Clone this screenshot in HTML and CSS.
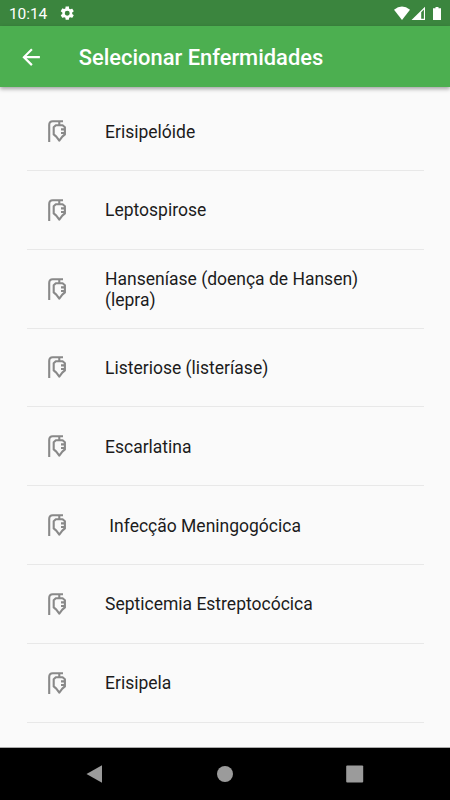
FILE: index.html
```html
<!DOCTYPE html>
<html lang="pt-BR">
<head>
<meta charset="utf-8">
<title>Selecionar Enfermidades</title>
<link rel="stylesheet" href="styles.css">
</head>
<body>
<svg class="defs" aria-hidden="true">
  <symbol id="drip" viewBox="0 0 26 26">
    <path d="M5.2 24V7Q5.2 3.3 8.8 3.3H19M15.3 3.3V7.2M11.8 7.2H18.6L20.9 9.2V16.4L18.3 18.6L15.3 22.6L12.3 18.6L9.7 16.4V9.2ZM20.9 11.4H17M20.9 15H17" fill="none" stroke="#898989" stroke-width="2.1" stroke-linejoin="round"/>
  </symbol>
</svg>
<div class="screen">
  <div class="status">
    <span class="time">10:14</span>
    <svg class="gear" viewBox="0 0 24 24"><path fill="#fff" fill-rule="evenodd" d="M19.14 12.94c.04-.3.06-.61.06-.94s-.02-.64-.07-.94l2.03-1.58a.49.49 0 0 0 .12-.61l-1.92-3.32a.49.49 0 0 0-.59-.22l-2.39.96a7 7 0 0 0-1.62-.94l-.36-2.54A.48.48 0 0 0 13.92 2h-3.84a.48.48 0 0 0-.48.41l-.36 2.54a7.3 7.3 0 0 0-1.62.94l-2.39-.96a.48.48 0 0 0-.59.22L2.74 8.87a.48.48 0 0 0 .12.61l2.03 1.58a7 7 0 0 0 0 1.88l-2.03 1.58a.49.49 0 0 0-.12.61l1.92 3.32c.12.22.37.29.59.22l2.39-.96c.5.38 1.03.7 1.62.94l.36 2.54c.05.24.24.41.48.41h3.84c.24 0 .44-.17.47-.41l.36-2.54a7.3 7.3 0 0 0 1.62-.94l2.39.96c.22.08.47 0 .59-.22l1.92-3.32a.48.48 0 0 0-.12-.61zM12 15.6a3.6 3.6 0 1 1 0-7.2 3.6 3.6 0 0 1 0 7.2z"/></svg>
    <svg class="signals" viewBox="0 0 50 16" fill="#fff">
      <path d="M0 3.7Q8-2.7 16 3.7L8 14Z"/>
      <path fill-rule="evenodd" d="M17.5 14L31 .7V14ZM27.2 6.2V12.8H29.9V3.6Z"/>
      <path d="M39.5 2.3H41.5V1H44.5V2.3H47V14H39V2.3Z"/>
    </svg>
  </div>
  <header class="appbar">
    <svg class="back" viewBox="0 0 24 24"><path fill="#fff" d="M20 11H7.83l5.59-5.59L12 4l-8 8 8 8 1.41-1.41L7.83 13H20z"/></svg>
    <h1>Selecionar Enfermidades</h1>
  </header>
  <ul class="list">
    <li><svg><use href="#drip"/></svg><span>Erisipelóide</span></li>
    <li><svg><use href="#drip"/></svg><span>Leptospirose</span></li>
    <li><svg><use href="#drip"/></svg><span>Hanseníase (doença de Hansen) (lepra)</span></li>
    <li><svg><use href="#drip"/></svg><span>Listeriose (listeríase)</span></li>
    <li><svg><use href="#drip"/></svg><span>Escarlatina</span></li>
    <li><svg><use href="#drip"/></svg><span>&nbsp;Infecção Meningogócica</span></li>
    <li><svg><use href="#drip"/></svg><span>Septicemia Estreptocócica</span></li>
    <li><svg><use href="#drip"/></svg><span>Erisipela</span></li>
  </ul>
  <nav class="navbar">
    <svg viewBox="0 0 20 20"><path d="M2.5 10L18 1.2V18.8Z"/></svg>
    <svg viewBox="0 0 20 20"><circle cx="11" cy="10" r="8"/></svg>
    <svg viewBox="0 0 20 20"><rect x="1.2" y="1.5" width="17" height="17" rx="1"/></svg>
  </nav>
</div>
</body>
</html>
```
FILE: styles.css
```css
body {
  margin: 0;
  font-family: Roboto, "Liberation Sans", sans-serif;
}

.defs {
  display: none;
}

.screen {
  display: flex;
  flex-direction: column;
  height: 800px;
  overflow: hidden;
  background: #fafafa;
}

.status {
  flex: none;
  display: flex;
  align-items: center;
  box-sizing: border-box;
  height: 26px;
  padding: 1px 6px 0 9px;
  background: #3b853e;
  color: #fff;
}

.time {
  width: 50px;
  font-size: 15.5px;
  letter-spacing: -0.1px;
}

.gear {
  width: 16.5px;
  height: 16.5px;
}

.signals {
  width: 50px;
  height: 16px;
  margin-left: auto;
}

.appbar {
  flex: none;
  display: flex;
  align-items: center;
  height: 61px;
  padding-left: 18px;
  background: #4caf50;
  box-shadow: 0 2px 4px rgba(0, 0, 0, 0.35);
  color: #fff;
}

.back {
  width: 26.25px;
  height: 26.25px;
  padding-top: 1px;
}

.appbar h1 {
  margin: 0 0 0 34.5px;
  padding-top: 2px;
  font-size: 21.9px;
  font-weight: 500;
}

.list {
  flex: 1;
  margin: 0;
  padding: 5.2px 26px 0 27px;
  list-style: none;
}

.list li {
  display: flex;
  align-items: center;
  box-sizing: border-box;
  height: 78.8px;
  padding: 0 18px 0 17px;
  border-bottom: 1px solid #e8e8e8;
  color: #1c1c1c;
  font-size: 17.5px;
  line-height: 21px;
}

.list svg {
  flex: none;
  width: 26px;
  height: 26px;
}

.list span {
  margin-left: 35px;
  padding-top: 2px;
}

.navbar {
  flex: none;
  display: flex;
  align-items: center;
  justify-content: space-between;
  box-sizing: border-box;
  height: 53px;
  padding: 0 85px 0 83.5px;
  border-top: 1px solid #aaa;
  background: #000;
}

.navbar svg {
  width: 20px;
  height: 20px;
  fill: #9b9b9b;
}
```
